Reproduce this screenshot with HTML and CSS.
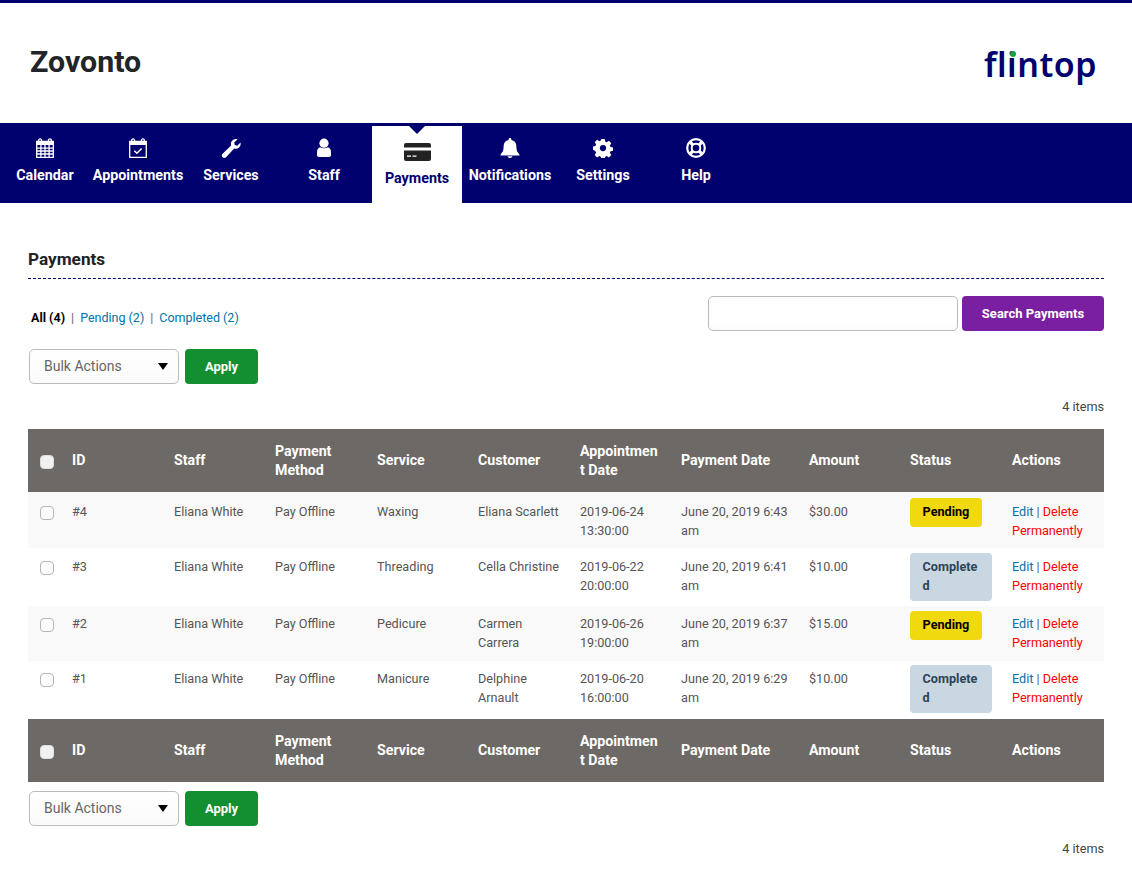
FILE: index.html
```html
<!DOCTYPE html>
<html lang="en">
<head>
<meta charset="utf-8">
<title>Payments</title>
<link rel="stylesheet" href="styles.css">
</head>
<body>
<header class="top">
  <h1 class="brand">Zovonto</h1>
  <div class="logo">flintop<span class="logo-dot"></span></div>
</header>
<nav class="nav">
  <a class="nav-item"><svg class="ico" viewBox="0 0 20 20"><path fill="none" stroke="currentColor" stroke-width="1.3" d="M1.700 3.500h16.600v15.800H1.700zM1.700 10.100h16.600M1.700 13h16.600M1.700 16h16.600M5.900 7v12.300M10 7v12.300M14.100 7v12.300"/><path fill="currentColor" d="M1.700 3.500h16.600V7H1.700z"/><path fill="none" stroke="currentColor" stroke-width="1.300" d="M3.600 4.500V2.400a1.500 1.500 0 0 1 3 0v2.100M13.400 4.500V2.400a1.500 1.500 0 0 1 3 0v2.100"/></svg><span>Calendar</span></a>
  <a class="nav-item"><svg class="ico" viewBox="0 0 20 20"><path fill="none" stroke="currentColor" stroke-width="1.300" d="M1.700 3.500h16.600v15.800H1.700z"/><path fill="currentColor" d="M1.700 3.500h16.600V7H1.700z"/><path fill="none" stroke="currentColor" stroke-width="1.300" d="M3.600 4.500V2.400a1.500 1.500 0 0 1 3 0v2.100M13.400 4.500V2.400a1.500 1.500 0 0 1 3 0v2.100"/><path fill="none" stroke="currentColor" stroke-width="1.500" d="M6.300 12.700l2.600 2.500 4.800-4.700"/></svg><span>Appointments</span></a>
  <a class="nav-item"><svg class="ico" viewBox="0 0 20 20"><path fill="currentColor" d="M19.500 4.500c.4 2.200-.2 4-1.600 5.200-1.300 1.100-3 1.400-4.700.9L5 19.200c-.9.900-2.400 1-3.400.1-1.100-1-1.100-2.600 0-3.600l8.500-8.200c-.5-1.800-.1-3.600 1.300-4.900C12.800 1.300 14.700.8 16.600 1.300l-3.400 3.200.5 2.600 2.600.6z"/></svg><span>Services</span></a>
  <a class="nav-item"><svg class="ico" viewBox="0 0 20 20"><circle cx="10" cy="5.200" r="4.600" fill="currentColor"/><path fill="currentColor" d="M6 9.300c2.300 1.400 5.700 1.400 8 0 2 .6 3 2.500 3 5v2.600c0 1.100-.9 2-2 2H5c-1.100 0-2-.9-2-2v-2.600c0-2.500 1-4.400 3-5z"/></svg><span>Staff</span></a>
  <a class="nav-item nav-active"><svg class="ico ico-card" viewBox="0 0 27 18"><path fill="currentColor" fill-rule="evenodd" d="M2 0h23a2 2 0 0 1 2 2v2.500H0V2a2 2 0 0 1 2-2zM0 7.500h27V16a2 2 0 0 1-2 2H2a2 2 0 0 1-2-2zM3 12.500v1.300h4v-1.300zM8.500 12.500v1.300h4v-1.300z"/></svg><span>Payments</span></a>
  <a class="nav-item"><svg class="ico" viewBox="0 0 20 20"><path fill="currentColor" d="M10 0c.8 0 1.400.6 1.400 1.400v.7c3 .6 5 3 5 6.100 0 5 1.300 6 3 8v1.300H.6v-1.300c1.700-2 3-3 3-8 0-3.100 2-5.500 5-6.100v-.7C8.600.6 9.200 0 10 0zM7.600 18.300h4.800C12.400 19.400 11.300 20 10 20s-2.400-.6-2.400-1.700z"/></svg><span>Notifications</span></a>
  <a class="nav-item"><svg class="ico" viewBox="0 0 20 20"><path fill="currentColor" fill-rule="evenodd" d="M8.300 1h3.400l.5 2.500 1.500.7 2.200-1.400 2.400 2.400-1.400 2.200.7 1.500 2.400.5v3.400l-2.400.5-.7 1.500 1.400 2.200-2.400 2.400-2.200-1.400-1.500.7-.5 2.200H8.300l-.5-2.200-1.500-.7-2.200 1.400-2.400-2.400 1.400-2.200-.7-1.500L0 11.800V8.400l2.400-.5.7-1.500-1.400-2.200 2.400-2.400 2.200 1.400 1.500-.7zM10 7a3.100 3.100 0 1 0 0 6.200A3.100 3.100 0 0 0 10 7z"/></svg><span>Settings</span></a>
  <a class="nav-item"><svg class="ico" viewBox="0 0 20 20"><circle cx="10" cy="10" r="8.800" fill="none" stroke="currentColor" stroke-width="2.200"/><circle cx="10" cy="10" r="4.300" fill="none" stroke="currentColor" stroke-width="2"/><path fill="none" stroke="currentColor" stroke-width="3.200" d="M3.800 3.800l3.200 3.200M16.200 3.800L13 7M3.800 16.200L7 13M16.200 16.200L13 13"/></svg><span>Help</span></a>
</nav>
<main class="content">
  <h2 class="page-title">Payments</h2>
  <div class="filter-row">
    <ul class="filters">
      <li class="current">All (4)</li>
      <li class="sep">|</li>
      <li><a>Pending (2)</a></li>
      <li class="sep">|</li>
      <li><a>Completed (2)</a></li>
    </ul>
    <form class="search">
      <input class="search-input" type="text">
      <button class="btn btn-purple" type="button">Search Payments</button>
    </form>
  </div>
  <div class="bulk">
    <div class="select">Bulk Actions<span class="caret"></span></div>
    <button class="btn btn-green" type="button">Apply</button>
  </div>
  <p class="count">4 items</p>
  <table class="grid">
    <colgroup>
      <col class="c-check"><col class="c-w"><col class="c-n"><col class="c-w"><col class="c-n"><col class="c-w"><col class="c-n"><col class="c-date"><col class="c-n"><col class="c-w"><col class="c-w">
    </colgroup>
    <thead>
      <tr>
        <th class="chk"><span class="box box-head"></span></th><th>ID</th><th>Staff</th><th>Payment Method</th><th>Service</th><th>Customer</th><th>Appointment Date</th><th>Payment Date</th><th>Amount</th><th>Status</th><th>Actions</th>
      </tr>
    </thead>
    <tbody>
      <tr class="odd">
        <td class="chk"><span class="box"></span></td><td>#4</td><td>Eliana White</td><td>Pay Offline</td><td>Waxing</td><td>Eliana Scarlett</td><td>2019-06-24 13:30:00</td><td>June 20, 2019 6:43 am</td><td>$30.00</td><td class="st"><span class="pill pending">Pending</span></td><td><a class="edit">Edit</a> | <a class="del">Delete Permanently</a></td>
      </tr>
      <tr>
        <td class="chk"><span class="box"></span></td><td>#3</td><td>Eliana White</td><td>Pay Offline</td><td>Threading</td><td>Cella Christine</td><td>2019-06-22 20:00:00</td><td>June 20, 2019 6:41 am</td><td>$10.00</td><td class="st"><span class="pill done">Completed</span></td><td><a class="edit">Edit</a> | <a class="del">Delete Permanently</a></td>
      </tr>
      <tr class="odd">
        <td class="chk"><span class="box"></span></td><td>#2</td><td>Eliana White</td><td>Pay Offline</td><td>Pedicure</td><td>Carmen Carrera</td><td>2019-06-26 19:00:00</td><td>June 20, 2019 6:37 am</td><td>$15.00</td><td class="st"><span class="pill pending">Pending</span></td><td><a class="edit">Edit</a> | <a class="del">Delete Permanently</a></td>
      </tr>
      <tr>
        <td class="chk"><span class="box"></span></td><td>#1</td><td>Eliana White</td><td>Pay Offline</td><td>Manicure</td><td>Delphine Arnault</td><td>2019-06-20 16:00:00</td><td>June 20, 2019 6:29 am</td><td>$10.00</td><td class="st"><span class="pill done">Completed</span></td><td><a class="edit">Edit</a> | <a class="del">Delete Permanently</a></td>
      </tr>
    </tbody>
    <tfoot>
      <tr>
        <th class="chk"><span class="box box-head"></span></th><th>ID</th><th>Staff</th><th>Payment Method</th><th>Service</th><th>Customer</th><th>Appointment Date</th><th>Payment Date</th><th>Amount</th><th>Status</th><th>Actions</th>
      </tr>
    </tfoot>
  </table>
  <div class="bulk bulk-bottom">
    <div class="select">Bulk Actions<span class="caret"></span></div>
    <button class="btn btn-green" type="button">Apply</button>
  </div>
  <p class="count">4 items</p>
</main>
</body>
</html>
```
FILE: styles.css
```css
* { box-sizing: border-box; }
html, body { margin: 0; padding: 0; }
body { font-family: Roboto, "Liberation Sans", sans-serif; font-size: 12.65px; line-height: 19.2px; color: #555; background: #fff; }

.top { height: 123px; border-top: 3px solid #00006e; display: flex; justify-content: space-between; align-items: flex-start; padding: 0 35px 0 30px; }
.brand { margin: 40px 0 0; font-size: 30.3px; line-height: 38px; font-weight: 700; color: #212529; }
.logo { position: relative; margin-top: 37px; font-family: "Noto Sans", sans-serif; font-size: 34px; line-height: 48px; font-weight: 600; letter-spacing: .5px; color: #00006e; }
.logo-dot { position: absolute; left: 26px; top: 11px; width: 6px; height: 6px; border-radius: 50%; background: #12a14b; }

.nav { height: 80px; background: #00006e; display: flex; gap: 3px; padding-top: 3px; }
.nav-item { width: 90px; display: flex; flex-direction: column; align-items: center; color: #fff; font-size: 14.3px; font-weight: 700; line-height: 20px; padding-top: 12px; white-space: nowrap; }
.nav-item span { margin-top: 7px; }
.ico { width: 20px; height: 20px; display: block; }
.nav-active { position: relative; background: #fff; color: #00006e; padding-top: 15px; }
.nav-active::before { content: ""; position: absolute; left: 37px; top: 0; border: 8px solid transparent; border-top-color: #00006e; border-bottom-width: 0; }
.ico-card { width: 27px; height: 18px; color: #222; margin-top: 2px; }

.content { padding: 0 28px; }
.page-title { margin: 0; padding: 46px 0 9px; border-bottom: 1px dashed #00006e; font-size: 17.2px; line-height: 20px; font-weight: 700; color: #222; }

.filter-row { display: flex; justify-content: space-between; align-items: flex-start; margin-top: 17px; }
.filters { list-style: none; display: flex; gap: 6px; margin: 12px 0 0; padding: 0 0 0 3px; font-size: 12.5px; }
.filters a { color: #0073aa; }
.filters .current { color: #000; font-weight: 700; }
.filters .sep { color: #666; }
.search { display: flex; gap: 4px; margin: 0; }
.search-input { width: 250px; height: 35px; border: 1px solid #bbb; border-radius: 5px; background: #fff; box-shadow: inset 0 -4px 6px rgba(0, 0, 0, .02); margin: 0; }
.btn { border: 0; border-radius: 4px; color: #fff; font-family: inherit; font-weight: 700; padding: 0; height: 35px; }
.btn-purple { width: 142px; background: #7a1fa2; font-size: 13px; }
.btn-green { width: 73px; background: #138f31; font-size: 13px; }

.bulk { display: flex; gap: 6px; margin: 18px 0 0 1px; }
.select { position: relative; width: 150px; height: 35px; border: 1px solid #bbb; border-radius: 5px; padding-left: 14px; font-size: 14px; line-height: 33px; color: #666; background: linear-gradient(#fff, #fafafa); }
.caret { position: absolute; right: 10px; top: 13px; border: 5px solid transparent; border-top: 7px solid #000; border-bottom: 0; }
.count { margin: 13px 0; text-align: right; color: #444; }

.grid { width: 1076px; table-layout: fixed; border-collapse: collapse; }
.c-check { width: 34px; }
.c-w { width: 102px; }
.c-n { width: 101px; }
.c-date { width: 128px; }
.grid th { height: 63px; padding: 0 10px; background: #6c6966; color: #fff; font-size: 14.2px; font-weight: 700; text-align: left; overflow-wrap: anywhere; }
.grid td { padding: 8px 10px; vertical-align: top; color: #555; overflow-wrap: anywhere; }
.grid th.chk, .grid td.chk { padding-left: 12px; padding-right: 0; }
.grid td.st { padding-top: 5px; padding-bottom: 0; }
.odd td { background: #f9f9f9; }
tbody tr:nth-child(1) { height: 56px; }
tbody tr:nth-child(2) { height: 58px; }
tbody tr:nth-child(3) { height: 55px; }
tbody tr:nth-child(4) { height: 58px; }
.grid tbody tr:nth-child(1) td { padding-top: 9.5px; }
.grid tbody tr:nth-child(2) td { padding-top: 8.5px; }
.grid tbody tr:nth-child(1) td.st { padding-top: 6px; }
.grid tbody tr:nth-child(2) td.st { padding-top: 5px; }
.grid tbody tr:nth-child(4) td.st { padding-top: 4px; }
.box { display: block; width: 14px; height: 14px; border: 1px solid #b5b5b5; border-radius: 4px; background: #fcfcfc; margin-top: 4px; }
.box-head { background: #f1f1f1; border-color: #ddd; margin-top: 2px; }
.pill { display: inline-block; vertical-align: top; padding: 4px 12.6px 5.6px; border-radius: 4px; font-weight: 700; }
.pending { background: #f0d90f; color: #000; }
.done { background: #c8d7e1; color: #2e4453; }
.edit { color: #0073aa; }
.del { color: #f00; }
.bulk-bottom { margin-top: 9px; }
```
